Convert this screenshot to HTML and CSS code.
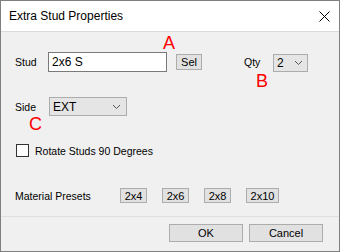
FILE: index.html
```html
<!DOCTYPE html>
<html>
<head>
<meta charset="utf-8">
<link rel="stylesheet" href="styles.css">
</head>
<body>
<div class="window">
  <div class="titlebar">
    <span class="title">Extra Stud Properties</span>
    <svg class="close" width="11" height="11" viewBox="0 0 11 11"><path d="M0.5 0.5 L10.5 10.5 M10.5 0.5 L0.5 10.5" stroke="#000" stroke-width="1" fill="none"/></svg>
  </div>
  <div class="content">
    <div class="main">
      <div class="row row1">
        <span class="label lbl-stud">Stud</span>
        <div class="textbox">2x6 S</div>
        <button class="btn btn-sel">Sel</button>
        <span class="label lbl-qty">Qty</span>
        <div class="combo combo-qty"><span>2</span><svg class="chev" width="7" height="4" viewBox="0 0 7 4"><path d="M0 0 L3.5 3.5 L7 0" stroke="#555" fill="none"/></svg></div>
      </div>
      <div class="row row2">
        <span class="label lbl-side">Side</span>
        <div class="combo combo-side"><span>EXT</span><svg class="chev" width="7" height="4" viewBox="0 0 7 4"><path d="M0 0 L3.5 3.5 L7 0" stroke="#555" fill="none"/></svg></div>
      </div>
      <div class="row row3">
        <span class="checkbox"></span>
        <span class="label">Rotate Studs 90 Degrees</span>
      </div>
      <div class="row row4">
        <span class="label lbl-mat">Material Presets</span>
        <div class="presets">
          <button class="btn preset">2x4</button>
          <button class="btn preset">2x6</button>
          <button class="btn preset">2x8</button>
          <button class="btn preset wide">2x10</button>
        </div>
      </div>
      <span class="mark mark-a">A</span>
      <span class="mark mark-b">B</span>
      <span class="mark mark-c">C</span>
    </div>
    <div class="footer">
      <button class="btn dlg">OK</button>
      <button class="btn dlg">Cancel</button>
    </div>
  </div>
</div>
</body>
</html>
```

FILE: styles.css
```css
* { box-sizing: border-box; }
html, body { margin: 0; padding: 0; }
body {
  width: 340px;
  height: 252px;
  font-family: "Liberation Sans", Arial, sans-serif;
  font-size: 10.5px;
  color: #000;
}
.window {
  width: 340px;
  height: 252px;
  border: 1px solid #7f7f7f;
  display: flex;
  flex-direction: column;
  background: #f0f0f0;
}
.titlebar {
  height: 31px;
  flex: none;
  background: #fff;
  border-bottom: 1px solid #dadada;
  display: flex;
  align-items: center;
  justify-content: space-between;
  padding: 0 9px 0 8px;
}
.title {
  font-family: "Liberation Sans", Arial, sans-serif;
  font-size: 12px;
  margin-top: -1px;
}
.close { display: block; }
.content {
  flex: 1;
  display: flex;
  flex-direction: column;
}
.main {
  flex: 1;
  position: relative;
  padding-left: 14px;
}
.row {
  display: flex;
  align-items: center;
}
.row1 { margin-top: 20px; height: 20px; }
.row2 { margin-top: 25px; height: 19px; }
.row3 { margin-top: 28px; height: 13px; }
.row4 { margin-top: 31px; height: 15px; }
.label { white-space: nowrap; }
.lbl-stud { width: 33px; }
.textbox {
  width: 119px;
  height: 20px;
  border: 1px solid #7a7a7a;
  background: #fff;
  padding: 2px 0 0 3px;
  line-height: 15px;
  font-size: 12px;
}
.btn {
  font-family: "Liberation Sans", Arial, sans-serif;
  font-size: 11px;
  color: #000;
  background: #e1e1e1;
  border: 1px solid #adadad;
  padding: 0;
  margin: 0;
  display: flex;
  align-items: center;
  justify-content: center;
}
.btn-sel {
  width: 26px;
  height: 16px;
  margin-left: 9px;
  margin-top: -1px;
}
.lbl-qty { margin-left: 42px; width: 29px; }
.combo {
  display: flex;
  align-items: center;
  justify-content: space-between;
  background: #e5e5e5;
  border: 1px solid #acacac;
  font-size: 12px;
}
.combo-qty {
  width: 35px;
  height: 18px;
  margin-top: 2px;
  padding: 0 5px 0 3px;
}
.combo-side {
  width: 78px;
  height: 19px;
  padding: 0 6px 0 3px;
}
.chev { display: block; }
.lbl-side { width: 34px; }
.checkbox {
  width: 13px;
  height: 13px;
  border: 1px solid #333;
  background: #fff;
  margin-left: 1px;
  margin-right: 6px;
}
.lbl-mat { width: 105px; }
.presets { display: flex; gap: 15px; }
.preset { width: 27px; height: 15px; }
.preset.wide { width: 33px; }
.mark {
  position: absolute;
  color: #ff0000;
  font-family: "Liberation Sans", Arial, sans-serif;
  font-size: 18px;
  line-height: 18px;
}
.mark-a { left: 162px; top: 2px; }
.mark-b { left: 255px; top: 40px; }
.mark-c { left: 28px; top: 83px; }
.footer {
  flex: none;
  border-top: 1px solid #dfdfdf;
  padding: 7px 16px 9px 0;
  display: flex;
  justify-content: flex-end;
  gap: 6px;
}
.dlg {
  width: 74px;
  height: 18px;
}
```
